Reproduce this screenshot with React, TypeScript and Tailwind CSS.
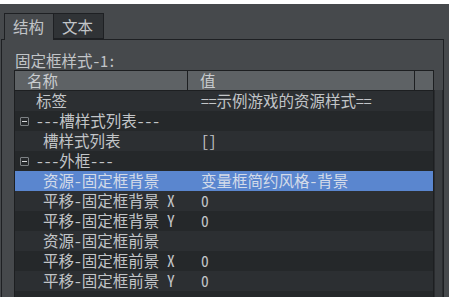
import React from "react";

type Row = {
  name: string;
  value?: string;
  kind: "top" | "group" | "child";
  selected?: boolean;
  light?: boolean;
};

const rows: Row[] = [
  { name: "标签", value: "==示例游戏的资源样式==", kind: "top", light: true },
  { name: "---槽样式列表---", kind: "group" },
  { name: "槽样式列表", value: "[]", kind: "child", light: true },
  { name: "---外框---", kind: "group" },
  { name: "资源-固定框背景", value: "变量框简约风格-背景", kind: "child", selected: true },
  { name: "平移-固定框背景 X", value: "0", kind: "child", light: true },
  { name: "平移-固定框背景 Y", value: "0", kind: "child" },
  { name: "资源-固定框前景", value: "", kind: "child", light: true },
  { name: "平移-固定框前景 X", value: "0", kind: "child" },
  { name: "平移-固定框前景 Y", value: "0", kind: "child", light: true },
  { name: "", value: "", kind: "child" },
];

function Expander() {
  return (
    <div className="absolute left-[5px] top-[6px] w-[9px] h-[9px] rounded-[1px] border border-[#7d8184] bg-[#26292b] flex items-center justify-center">
      <div className="w-[5px] h-px bg-[#d6d8da]" />
    </div>
  );
}

export default function App() {
  return (
    <div
      className="w-[449px] h-[297px] overflow-hidden bg-[#46494c] flex flex-col text-[15.5px] leading-none text-[#c2c5c8]"
      style={{ fontFamily: '"Noto Sans Mono CJK SC", "Noto Sans CJK SC", monospace' }}
    >
      <div className="h-[4px] bg-white shrink-0" />
      <div className="flex pl-[4px] pt-[9px] shrink-0">
        <div className="w-[50px] h-[27px] border border-b-0 border-[#1e2023] bg-[#46494c] flex items-start pt-[5px] pl-[8px] relative z-10 -mb-px">
          结构
        </div>
        <div className="w-[50px] h-[26px] border border-l-0 border-[#1e2023] bg-[#303336] flex items-start pt-[5px] pl-[8px]">
          文本
        </div>
      </div>
      <div className="ml-[1px] w-[443px] flex-1 border border-b-0 border-[#1e2023] bg-[#46494c] pl-[12px] pt-[14px] flex flex-col">
        <div className="h-[16px] pl-px -mt-px">固定框样式-1:</div>
        <div className="flex flex-1 min-h-0 mt-px">
          <div className="w-[420px] border border-b-0 border-[#1d1f21] flex flex-col bg-[#25282a]">
            <div className="flex h-[20px] bg-[#5e6265] border-b border-[#1d1f21] text-[#c9cccf] shrink-0">
              <div className="w-[173px] border-r border-[#1d1f21] pl-[12px] pt-[2px]">名称</div>
              <div className="w-[227px] border-r border-[#1d1f21] pl-[12px] pt-[2px]">值</div>
              <div className="flex-1" />
            </div>
            {rows.map((r, i) => (
              <div
                key={i}
                className={
                  "flex h-[20px] shrink-0 " +
                  (r.selected
                    ? "bg-[#5a86cf] text-[#d3dbe9]"
                    : r.light
                    ? "bg-[#2c2f32]"
                    : "bg-[#25282a]")
                }
              >
                <div
                  className={
                    "relative w-[186px] pt-[2px] whitespace-pre " +
                    (r.kind === "child" ? "pl-[28px]" : "pl-[21px]")
                  }
                >
                  {r.kind === "group" && <Expander />}
                  {r.name}
                </div>
                <div className="flex-1 pt-[2px] whitespace-pre">{r.value}</div>
              </div>
            ))}
          </div>
          <div className="w-[9px] mt-[20px] border-x border-[#2a2c2f] bg-[#3a3d40]" />
        </div>
      </div>
    </div>
  );
}
